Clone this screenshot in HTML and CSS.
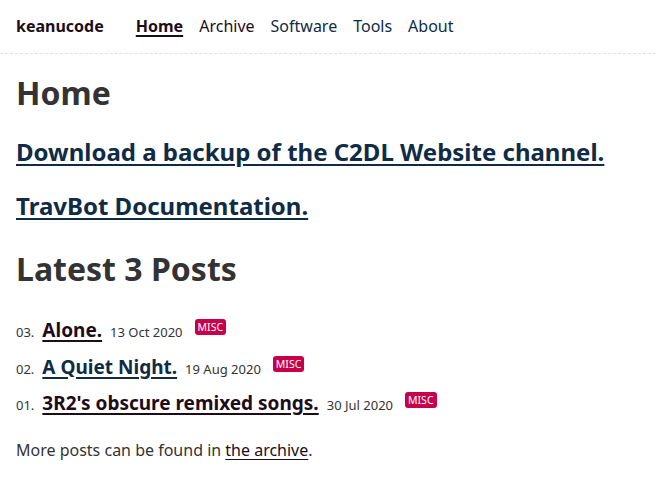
FILE: index.html
```html
<!DOCTYPE html>
<html lang="en">
<head>
<meta charset="utf-8">
<title>keanucode</title>
<link rel="stylesheet" href="styles.css">
</head>
<body>
<header class="site-header">
  <a class="brand" href="#">keanucode</a>
  <nav class="nav">
    <a class="nav-link active" href="#">Home</a>
    <a class="nav-link visited" href="#">Archive</a>
    <a class="nav-link" href="#">Software</a>
    <a class="nav-link" href="#">Tools</a>
    <a class="nav-link" href="#">About</a>
  </nav>
</header>
<main class="content">
  <h1 class="page-title">Home</h1>
  <h2 class="big-link"><a href="#">Download a backup of the C2DL Website channel.</a></h2>
  <h2 class="big-link"><a href="#">TravBot Documentation.</a></h2>
  <h1 class="page-title latest">Latest 3 Posts</h1>
  <ol class="posts">
    <li class="post"><span class="num">03.</span><a class="post-title visited" href="#">Alone.</a><span class="date">13 Oct 2020</span><span class="tag">MISC</span></li>
    <li class="post"><span class="num">02.</span><a class="post-title" href="#">A Quiet Night.</a><span class="date">19 Aug 2020</span><span class="tag">MISC</span></li>
    <li class="post"><span class="num">01.</span><a class="post-title visited" href="#">3R2's obscure remixed songs.</a><span class="date">30 Jul 2020</span><span class="tag">MISC</span></li>
  </ol>
  <p class="more">More posts can be found in <a class="visited" href="#">the archive</a>.</p>
</main>
</body>
</html>
```
FILE: styles.css
```css
html, body {
  margin: 0;
  padding: 0;
  background: #fff;
}
body {
  font-family: "Noto Sans", "Open Sans", sans-serif;
  color: #333;
  font-size: 16px;
}
a {
  color: #0f2b45;
}
a.visited {
  color: #1e0c19;
}
.site-header {
  display: flex;
  align-items: baseline;
  padding: 15px 16px 13px;
  border-bottom: 1px dashed #e2e2e2;
  height: 25px;
}
.brand {
  font-weight: bold;
  font-size: 16px;
  color: #1e0c19;
  text-decoration: none;
  margin-right: 32px;
}
.nav {
  display: flex;
  gap: 16px;
}
.nav-link {
  text-decoration: none;
  font-size: 16px;
}
.nav-link.active {
  font-weight: bold;
  color: #1e0c19;
  text-decoration: underline;
  text-underline-offset: 3px;
  text-decoration-thickness: 2px;
}
.content {
  padding: 0 16px;
}
.page-title {
  font-size: 32px;
  font-weight: bold;
  margin: 17px 0 0;
  line-height: 44px;
}
.big-link {
  font-size: 24px;
  margin: 20px 0 0;
  line-height: 34px;
}
.big-link a {
  text-decoration-thickness: 2px;
  text-underline-offset: 3px;
}
.latest {
  margin-top: 24px;
}
.posts {
  list-style: none;
  margin: 26px 0 0;
  padding: 0;
}
.post {
  display: flex;
  align-items: baseline;
  height: 36.5px;
}
.num {
  font-size: 13px;
  margin-right: 8px;
}
.post-title {
  font-size: 19px;
  font-weight: bold;
  text-decoration-thickness: 2px;
  text-underline-offset: 3px;
  margin-right: 8px;
}
.date {
  font-size: 13px;
  margin-right: 12px;
}
.tag {
  display: inline-block;
  font-size: 10.5px;
  line-height: 16px;
  background: #c8004b;
  color: #fff;
  padding: 0 3px;
  border-radius: 3px;
  position: relative;
  top: -6px;
}
.more {
  margin: 12px 0 0;
}
.more a {
  text-underline-offset: 3px;
}
```
